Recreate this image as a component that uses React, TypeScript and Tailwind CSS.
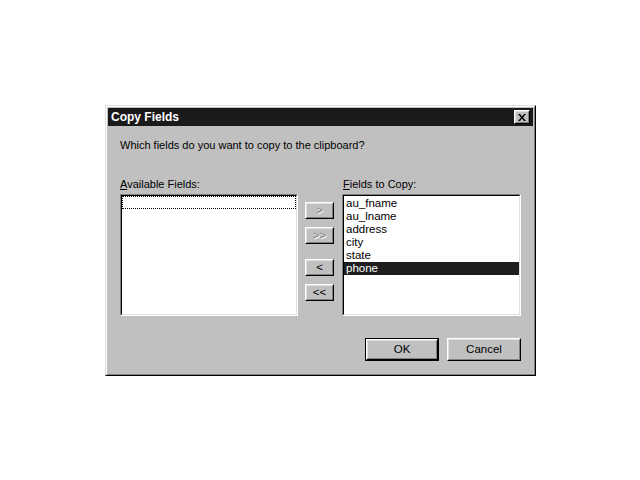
import React from "react";

const font = { fontFamily: '"Liberation Sans", Arial, sans-serif' };

function Raised({ children, className = "", def = false, disabled = false }: { children: React.ReactNode; className?: string; def?: boolean; disabled?: boolean }) {
  const inner = (
    <div className="h-full w-full border border-t-white border-l-white border-r-black border-b-black">
      <div className={`flex h-full w-full items-center justify-center border border-t-[#dfdfdf] border-l-[#dfdfdf] border-r-[#808080] border-b-[#808080] text-[11.5px] ${disabled ? "text-[#808080] [text-shadow:1px_1px_0_#ffffff]" : "text-black"}`}>
        {children}
      </div>
    </div>
  );
  return def ? <div className={`border border-black ${className}`}>{inner}</div> : <div className={className}>{inner}</div>;
}

function Sunken({ children, className = "" }: { children?: React.ReactNode; className?: string }) {
  return (
    <div className={`border border-t-[#808080] border-l-[#808080] border-r-white border-b-white ${className}`}>
      <div className="h-full w-full border border-t-black border-l-black border-r-[#dfdfdf] border-b-[#dfdfdf] bg-white">
        {children}
      </div>
    </div>
  );
}

export default function App() {
  const items = ["au_fname", "au_lname", "address", "city", "state", "phone"];
  return (
    <div className="h-[480px] w-[640px] bg-white pt-[105px] pl-[105px]" style={font}>
      <div className="h-[271px] w-[431px] border border-t-[#dfdfdf] border-l-[#dfdfdf] border-r-black border-b-black">
        <div className="flex h-full w-full flex-col border border-t-white border-l-white border-r-[#808080] border-b-[#808080] bg-[#c0c0c0] p-px">
          <div className="flex h-[18px] items-center justify-between bg-[#1a1a1a] pl-[3px] pr-[3px]">
            <span className="text-[12px] font-bold text-white">Copy Fields</span>
            <div className="h-[14px] w-[16px] border border-t-white border-l-white border-r-black border-b-black bg-[#c0c0c0]">
              <div className="flex h-full w-full items-center justify-center border border-t-[#dfdfdf] border-l-[#dfdfdf] border-r-[#808080] border-b-[#808080]">
                <svg width="8" height="7" viewBox="0 0 8 7">
                  <path d="M0 0h2l2 2.5L6 0h2L5 3.5 8 7H6L4 4.5 2 7H0l3-3.5z" fill="black" />
                </svg>
              </div>
            </div>
          </div>
          <div className="flex flex-1 flex-col pl-[12px] pr-[12px]">
            <div className="mt-[12px] h-[15px] text-[11px] leading-[15px] text-black">Which fields do you want to copy to the clipboard?</div>
            <div className="mt-[24px] flex">
              <div className="flex w-[178px] flex-col">
                <div className="h-[15px] text-[11px] leading-[15px] text-black"><u>A</u>vailable Fields:</div>
                <Sunken className="mt-[2px] h-[122px] w-[178px]">
                  <div className="h-[13px] border border-dotted border-black" />
                </Sunken>
              </div>
              <div className="ml-[7px] flex w-[29px] flex-col pt-[25px]">
                <Raised disabled className="h-[17px]">&gt;</Raised>
                <Raised disabled className="mt-[8px] h-[17px]">&gt;&gt;</Raised>
                <Raised className="mt-[15px] h-[17px]">&lt;</Raised>
                <Raised className="mt-[8px] h-[17px]">&lt;&lt;</Raised>
              </div>
              <div className="ml-[8px] flex w-[179px] flex-col">
                <div className="h-[15px] pl-px text-[11px] leading-[15px] text-black"><u>F</u>ields to Copy:</div>
                <Sunken className="mt-[2px] h-[122px] w-[179px]">
                  <div className="pt-px">
                    {items.map((it) => (
                      <div key={it} className={`h-[13px] pl-[2px] text-[11.5px] leading-[13px] ${it === "phone" ? "bg-[#1e1e1e] text-white" : "text-black"}`}>{it}</div>
                    ))}
                  </div>
                </Sunken>
              </div>
            </div>
            <div className="mt-[22px] flex justify-end gap-[8px]">
              <Raised def className="h-[23px] w-[74px]">OK</Raised>
              <Raised className="h-[23px] w-[74px]">Cancel</Raised>
            </div>
          </div>
        </div>
      </div>
    </div>
  );
}
